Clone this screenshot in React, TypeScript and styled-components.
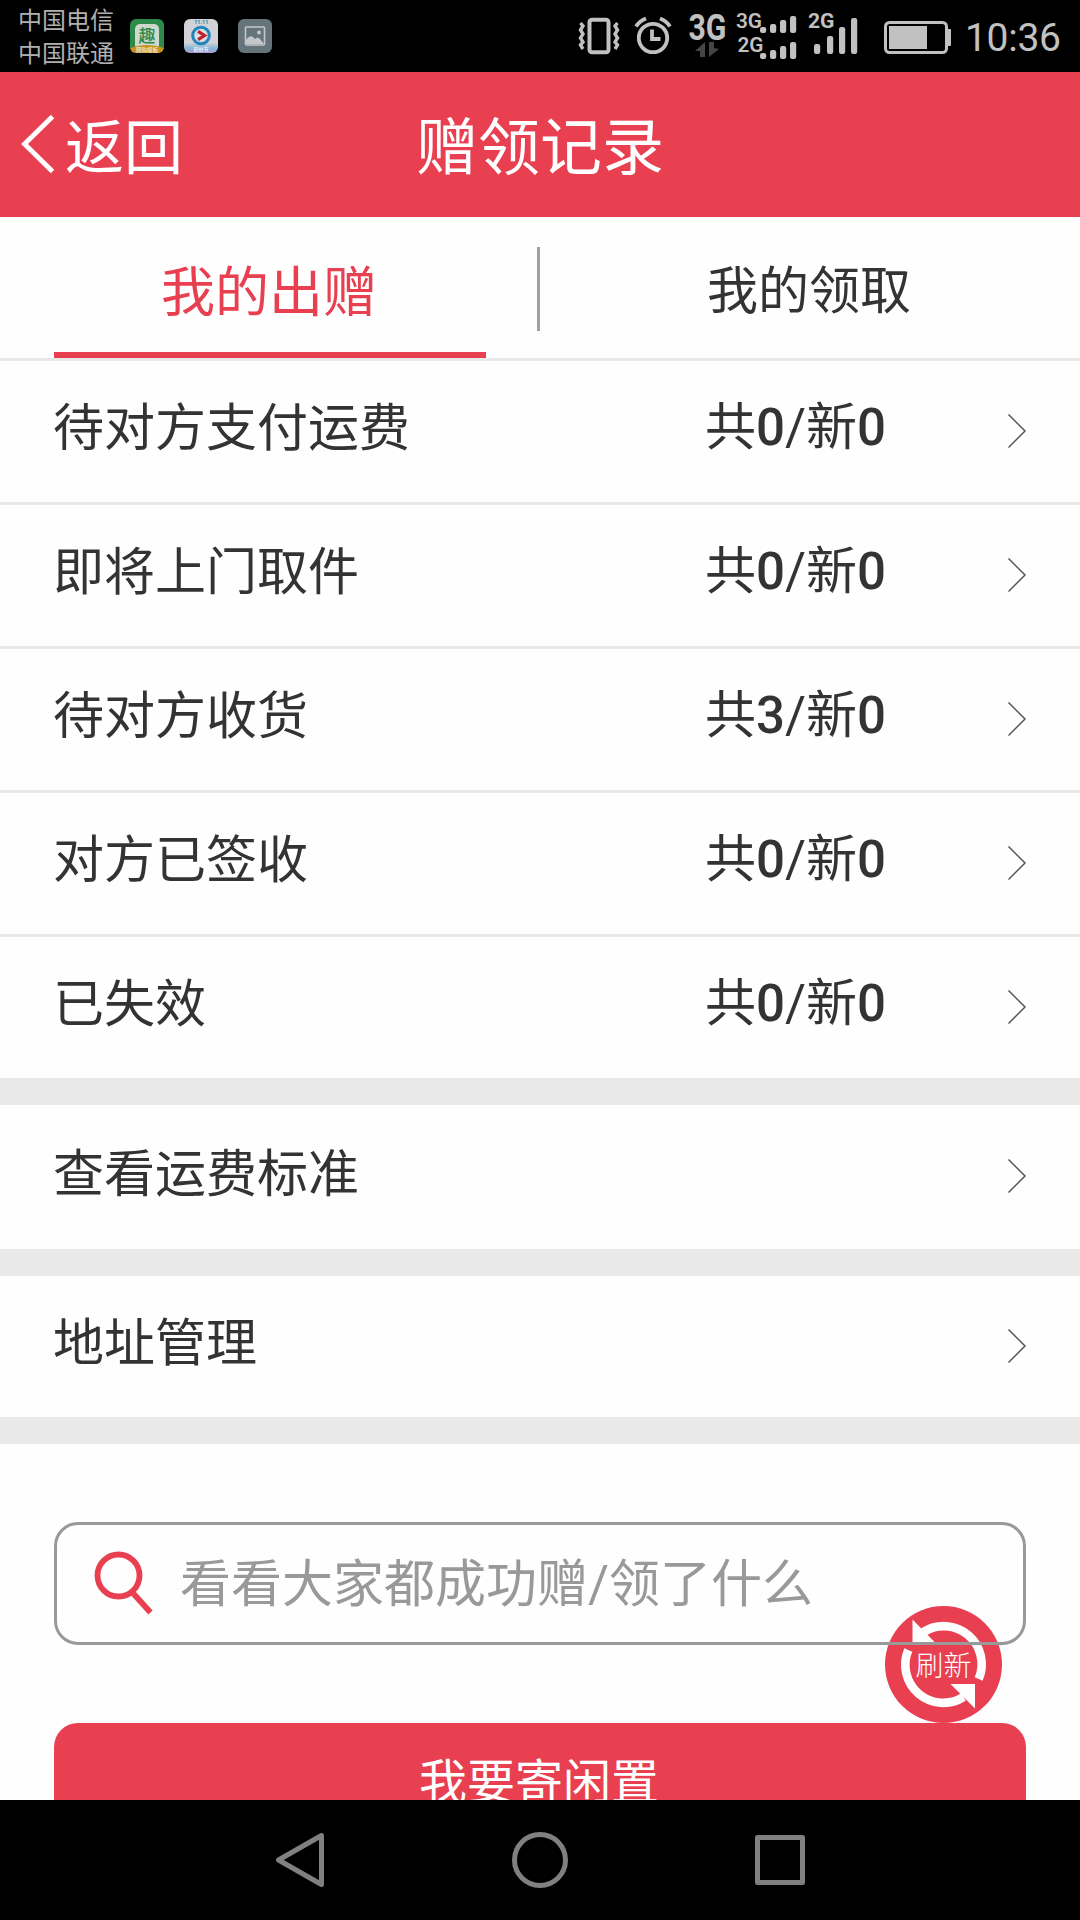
import React from 'react';
import styled, { createGlobalStyle } from 'styled-components';

const RED = '#e84050';
const INK = '#333333';
const GREY = '#999999';
const LINE = '#e9e9e9';
const STATUS = '#c1c1c1';
const FONT = `Roboto, 'Noto Sans CJK SC', sans-serif`;

const GlobalStyle = createGlobalStyle`
  * { box-sizing: border-box; }
  body { margin: 0; background: #000; font-family: ${FONT}; }
  svg { display: block; flex: none; }
`;

const Screen = styled.div`
  width: 1080px;
  height: 1920px;
  display: flex;
  flex-direction: column;
  overflow: hidden;
  background: #fefefe;
`;

const StatusBar = styled.header`
  flex: none;
  height: 72px;
  display: flex;
  align-items: center;
  background: #000;
  color: ${STATUS};
`;

const Carriers = styled.div`
  width: 130px;
  padding: 4px 0 0 18px;
  font-size: 24px;
  line-height: 33px;
  color: #b0b0b0;
  white-space: nowrap;
`;

const AppIcons = styled.div`
  display: flex;
  gap: 20px;
  flex: 1;
`;

const Clock = styled.time`
  width: 119px;
  padding: 3px 0 0 4px;
  font-size: 39px;
  line-height: 46px;
  letter-spacing: -0.3px;
  white-space: nowrap;
`;

const TitleBar = styled.div`
  flex: none;
  height: 145px;
  display: grid;
  grid-template-columns: 1fr auto 1fr;
  align-items: center;
  background: ${RED};
  color: #fff;
`;

const BackButton = styled.a`
  display: flex;
  align-items: center;
  gap: 11px;
  padding-left: 20px;
  font-size: 59px;
  line-height: 70px;
`;

const BackLabel = styled.span`
  padding-top: 8px;
`;

const Title = styled.h1`
  margin: 0;
  padding-top: 8px;
  font-size: 62px;
  font-weight: 400;
  line-height: 72px;
`;

const Tabs = styled.nav`
  flex: none;
  height: 144px;
  display: flex;
  align-items: flex-start;
  padding: 0 54px;
  border-bottom: 3px solid ${LINE};
`;

const Tab = styled.a<{ $active?: boolean }>`
  width: 432px;
  height: 141px;
  padding-top: ${p => (p.$active ? 7 : 4)}px;
  padding-right: 2px;
  display: flex;
  align-items: center;
  justify-content: center;
  border-bottom: 6px solid ${p => (p.$active ? RED : 'transparent')};
  color: ${p => (p.$active ? RED : INK)};
  font-size: ${p => (p.$active ? 54 : 51)}px;
`;

const TabDivider = styled.span`
  width: 3px;
  height: 84px;
  margin: 30px 54px 0 51px;
  background: #a0a0a0;
`;

const Group = styled.section`
  flex: none;
  border-bottom: 27px solid ${LINE};
`;

const Row = styled.a<{ $height?: number }>`
  height: ${p => p.$height ?? 144}px;
  display: flex;
  align-items: center;
  padding: 0 53px;
  color: ${INK};
  font-size: 51px;
  line-height: 60px;

  & + & {
    border-top: 3px solid ${LINE};
  }
`;

const RowLabel = styled.span`
  flex: 1;
  padding-bottom: 5px;
`;

const RowCount = styled.span`
  width: 302px;
  padding-bottom: 7px;
  white-space: nowrap;
`;

const Digit = styled.span`
  font-weight: 500;
`;

const Actions = styled.section`
  flex: 1;
  min-height: 0;
  padding: 78px 54px 0;
  position: relative;
  overflow: hidden;
`;

const SearchBox = styled.div`
  position: relative;
  height: 123px;
  display: flex;
  align-items: center;
  gap: 26px;
  padding: 0 0 0 36px;
  border: 3px solid ${GREY};
  border-radius: 24px;
  color: ${GREY};
  font-size: 51px;
  line-height: 60px;
`;

const Placeholder = styled.span`
  padding-top: 3px;
`;

const SendButton = styled.div`
  position: relative;
  height: 126px;
  margin-top: 78px;
  padding: 30px 2px 0 0;
  border-radius: 24px;
  background: ${RED};
  color: #fff;
  font-size: 48px;
  line-height: 60px;
  text-align: center;
`;

const RefreshBadge = styled.div`
  position: absolute;
  right: 78px;
  top: 162px;
  width: 117px;
  height: 117px;
  display: grid;
  place-items: center;
  border-radius: 50%;
  background: ${RED};
  color: #fff;
  font-size: 28px;
  font-weight: 300;
  line-height: 32px;

  & > * { grid-area: 1 / 1; }
`;

const RefreshLabel = styled.span`
  padding-top: 4px;
`;

const NavBar = styled.footer`
  flex: none;
  height: 120px;
  display: flex;
  align-items: center;
  justify-content: space-between;
  padding: 0 273px;
  background: #000;
`;

const Chevron = () => (
  <svg width="20" height="38" viewBox="0 0 20 38" fill="none" stroke="#555" strokeWidth="1.5">
    <path d="M1.5 1.5 18 18 1.5 34.5" />
  </svg>
);

const ShopIcon = () => (
  <svg width="34" height="34" viewBox="0 0 34 34">
    <defs>
      <clipPath id="shop"><rect width="34" height="34" rx="6" /></clipPath>
    </defs>
    <g clipPath="url(#shop)">
      <rect width="34" height="34" fill="#2c8a4b" />
      <rect x="5" y="5" width="24" height="26" rx="5" fill="#d0d8cc" />
      <text x="17" y="22.5" fontSize="17" fontWeight="500" textAnchor="middle" fill="#2c8a4b">趣</text>
      <path d="M0 29Q17 23 34 29V34H0Z" fill="#c9921c" />
      <text x="17" y="33" fontSize="5.500" fontWeight="700" textAnchor="middle" fill="#eadfc0">网购模板</text>
    </g>
  </svg>
);

const VideoIcon = () => (
  <svg width="34" height="34" viewBox="0 0 34 34">
    <defs>
      <linearGradient id="video" x1="0" y1="0" x2="0" y2="1">
        <stop offset="0.7" stopColor="#d2d3d6" />
        <stop offset="0.85" stopColor="#86b8d8" />
        <stop offset="1" stopColor="#a79bd0" />
      </linearGradient>
    </defs>
    <rect width="34" height="34" rx="6" fill="url(#video)" />
    <text x="17.3" y="5" fontSize="5.500" fontWeight="700" textAnchor="middle" fill="#2185b5">11.11</text>
    <circle cx="17" cy="16.5" r="8.3" fill="#dce0e4" stroke="#2385bd" strokeWidth="3" />
    <path d="M14 12.3 20.5 16.5 14 20.7" fill="none" stroke="#c0202c" strokeWidth="3.2" />
    <text x="17" y="32" fontSize="5" fontWeight="700" textAnchor="middle" fill="#eef3fa">砍价节</text>
  </svg>
);

const GalleryIcon = () => (
  <svg width="34" height="34" viewBox="0 0 34 34">
    <rect width="34" height="34" rx="6" fill="#66737b" />
    <rect x="7.5" y="8" width="19" height="18" rx="1" fill="none" stroke="#c3c7ca" strokeWidth="1.6" />
    <circle cx="21" cy="13.5" r="2" fill="#c3c7ca" />
    <path d="M8 21Q13 14 17 20Q20 17 22 20L26 25H8Z" fill="#c3c7ca" />
  </svg>
);

const VibrateIcon = () => (
  <svg width="51" height="72" viewBox="576 0 51 72" fill="none" stroke={STATUS} strokeWidth="3.400">
    <rect x="589.5" y="19.7" width="19" height="32.6" rx="2.5" strokeWidth="4" />
    <path d="M580.500 23l2.500 3-2.500 4 2.500 4-2.500 4 2.500 4-2.500 3 2.500 4M617.500 23l-2.500 3 2.500 4-2.500 4 2.500 4-2.500 4 2.500 3-2.500 4" />
  </svg>
);

const AlarmIcon = () => (
  <svg width="60" height="72" viewBox="627 0 60 72" fill="none" stroke={STATUS} strokeWidth="3.8">
    <circle cx="653" cy="38" r="14.200" />
    <path d="M652 29.500V39h8.500" />
    <path d="M636 26.500Q639.500 21 646 18.500M670 26.500Q666.500 21 660 18.500" />
  </svg>
);

const Network = () => (
  <svg width="48" height="72" viewBox="687 0 48 72" fill={STATUS}>
    <text x="688.5" y="39.500" fontSize="36" fontWeight="700" textLength="38" lengthAdjust="spacingAndGlyphs">3G</text>
    <path fill="#454545" d="M695 51l10-9v15h-5v-6zM709 42l5 0v6l5 1-10 8z" />
  </svg>
);

type Bar = [x: number, top: number, bottom: number];

const DUAL_BARS: Bar[] = [
  [760, 27, 33], [770, 24, 33], [780, 20, 33], [790, 16, 33],
  [760, 53, 59], [770, 50, 59], [780, 46, 59], [790, 42, 59],
];
const SINGLE_BARS: Bar[] = [[814, 44, 54], [827, 36, 54], [839, 27, 54], [851, 18, 54]];

const bars = (list: Bar[]) =>
  list.map(([x, top, bottom]) => (
    <rect key={`${x}-${top}`} x={x} y={top} width="6.200" height={bottom - top} rx="2.200" />
  ));

const DualSignal = () => (
  <svg width="70" height="72" viewBox="735 0 70 72" fill={STATUS} fontSize="21" fontWeight="600">
    <text x="736" y="27.500" textLength="26" lengthAdjust="spacingAndGlyphs">3G</text>
    <text x="737.5" y="51.500" textLength="26" lengthAdjust="spacingAndGlyphs">2G</text>
    {bars(DUAL_BARS)}
  </svg>
);

const SingleSignal = () => (
  <svg width="75" height="72" viewBox="805 0 75 72" fill={STATUS}>
    <text x="808" y="27.500" fontSize="21" fontWeight="700" textLength="26.500" lengthAdjust="spacingAndGlyphs">2G</text>
    {bars(SINGLE_BARS)}
  </svg>
);

const Battery = () => (
  <svg width="81" height="72" viewBox="880 0 81 72" fill={STATUS}>
    <rect x="885.5" y="22.500" width="61" height="30" rx="4" fill="none" stroke={STATUS} strokeWidth="3" />
    <rect x="889" y="26" width="38" height="23" />
    <rect x="947" y="29" width="4" height="17" rx="1" />
  </svg>
);

const SearchIcon = () => (
  <svg width="61" height="66" viewBox="93 1551 61 66" fill="none" stroke={RED} strokeWidth="5.800">
    <circle cx="118.5" cy="1575.500" r="21" />
    <path d="M132 1592 150.500 1612.500" />
  </svg>
);

const RefreshArrows = () => (
  <svg width="117" height="117" viewBox="-58.5 -58.5 117 117">
    <g fill="none" stroke="#fff" strokeWidth="8.600">
      <path d="M-20 -32.500A38 38 0 0 1 35.200 14.500" />
      <path d="M20 32.500A38 38 0 0 1 -35.200 -14.500" />
    </g>
    <path fill="#fff" d="M-31 -45V-21H-7.500zM31.500 44V19.500H7z" />
  </svg>
);

const records = [
  { label: '待对方支付运费', total: 0, fresh: 0 },
  { label: '即将上门取件', total: 0, fresh: 0 },
  { label: '待对方收货', total: 3, fresh: 0 },
  { label: '对方已签收', total: 0, fresh: 0 },
  { label: '已失效', total: 0, fresh: 0 },
];

export default function App() {
  return (
    <Screen>
      <GlobalStyle />
      <StatusBar>
        <Carriers>
          <div>中国电信</div>
          <div>中国联通</div>
        </Carriers>
        <AppIcons>
          <ShopIcon />
          <VideoIcon />
          <GalleryIcon />
        </AppIcons>
        <VibrateIcon />
        <AlarmIcon />
        <Network />
        <DualSignal />
        <SingleSignal />
        <Battery />
        <Clock>10:36</Clock>
      </StatusBar>

      <TitleBar>
        <BackButton>
          <svg width="34" height="60" viewBox="0 0 34 60" fill="none" stroke="#fff" strokeWidth="4.800">
            <path d="M32.500 1.500 4.500 29 32.500 56.500" />
          </svg>
          <BackLabel>返回</BackLabel>
        </BackButton>
        <Title>赠领记录</Title>
      </TitleBar>

      <Tabs>
        <Tab $active>我的出赠</Tab>
        <TabDivider />
        <Tab>我的领取</Tab>
      </Tabs>

      <Group>
        {records.map((r, i) => (
          <Row key={r.label} $height={i === 0 ? 141 : 144}>
            <RowLabel>{r.label}</RowLabel>
            <RowCount>
              共<Digit>{r.total}</Digit>/新<Digit>{r.fresh}</Digit>
            </RowCount>
            <Chevron />
          </Row>
        ))}
      </Group>
      <Group>
        <Row>
          <RowLabel>查看运费标准</RowLabel>
          <Chevron />
        </Row>
      </Group>
      <Group>
        <Row $height={141}>
          <RowLabel>地址管理</RowLabel>
          <Chevron />
        </Row>
      </Group>

      <Actions>
        <RefreshBadge>
          <RefreshArrows />
          <RefreshLabel>刷新</RefreshLabel>
        </RefreshBadge>
        <SearchBox>
          <SearchIcon />
          <Placeholder>看看大家都成功赠/领了什么</Placeholder>
        </SearchBox>
        <SendButton>我要寄闲置</SendButton>
      </Actions>

      <NavBar>
        <svg width="54" height="60" viewBox="0 0 54 60" fill="none" stroke="#808080" strokeWidth="5" strokeLinejoin="round">
          <path d="M5.500 30 48.500 5.500V54.500Z" />
        </svg>
        <svg width="56" height="56" viewBox="0 0 56 56" fill="none" stroke="#808080" strokeWidth="5">
          <circle cx="28" cy="28" r="25.500" />
        </svg>
        <svg width="54" height="54" viewBox="0 0 54 54" fill="none" stroke="#808080" strokeWidth="5" strokeLinejoin="round">
          <rect x="4.500" y="4.500" width="45" height="45" />
        </svg>
      </NavBar>
    </Screen>
  );
}
